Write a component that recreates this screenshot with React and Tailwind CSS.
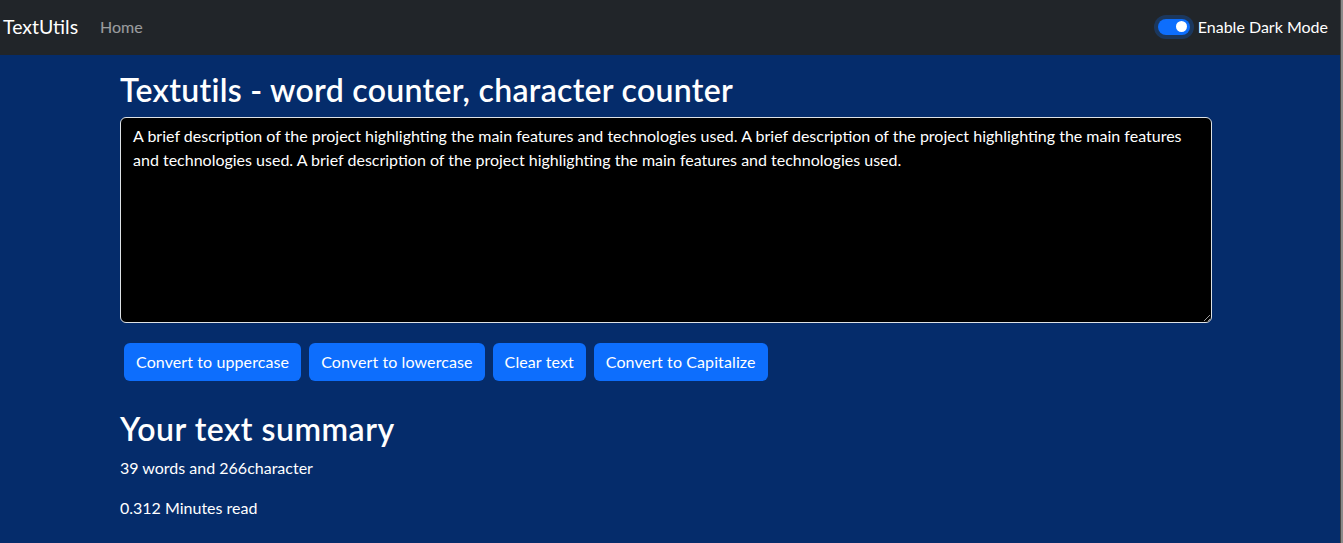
import React, { useState } from 'react';

const sample =
    'A brief description of the project highlighting the main features and technologies used. A brief description of the project highlighting the main features and technologies used. A brief description of the project highlighting the main features and technologies used.';

const App = () => {
    const [text, setText] = useState(sample);
    const words = text.split(/\s+/).filter((w) => w.length !== 0).length;

    return (
        <div className="min-h-[543px] bg-[#052c6b] font-['Lato',sans-serif] text-white flex">
            <div className="flex-1 flex flex-col">
                {/* Navbar */}
                <nav className="h-[55px] bg-[#212529] flex items-center justify-between pl-[3px] pr-[12px] pb-[2px]">
                    <div className="flex items-center">
                        <a className="text-[19.5px] leading-[30px] text-white mr-[22px]">TextUtils</a>
                        <a className="text-[16px] text-white/55">Home</a>
                    </div>
                    <label className="flex items-center gap-[8px]">
                        <span className="w-[32px] h-[16px] rounded-full bg-[#0d6efd] ring-4 ring-[#0d6efd]/25 flex items-center justify-end pr-[3px]">
                            <span className="w-[11px] h-[11px] rounded-full bg-white" />
                        </span>
                        <span className="text-[16px]">Enable Dark Mode</span>
                    </label>
                </nav>

                <main className="w-[1092px] ml-[120px] mt-[16px]">
                    <h1 className="text-[32px] leading-[38px] font-semibold tracking-[0.3px] mb-[8px]">
                        Textutils - word counter, character counter
                    </h1>
                    <textarea
                        rows={8}
                        value={text}
                        onChange={(e) => setText(e.target.value)}
                        className="block w-full h-[206px] bg-black text-white text-[16px] leading-[24px] px-[12px] py-[6px] border border-[#dee2e6] rounded-[6px] outline-none"
                    />
                    <div className="mt-[16px] flex">
                        {['Convert to uppercase', 'Convert to lowercase', 'Clear text', 'Convert to Capitalize'].map((label) => (
                            <button
                                key={label}
                                className="mx-[4px] my-[4px] h-[38px] px-[12px] rounded-[6px] bg-[#0d6efd] text-white text-[16px] tracking-[0.1px]"
                            >
                                {label}
                            </button>
                        ))}
                    </div>

                    <h2 className="mt-[25px] text-[32px] leading-[38px] font-semibold tracking-[0.5px] mb-[8px]">Your text summary</h2>
                    <p className="text-[16px] leading-[24px] mb-[16px]">
                        {words} words and {text.length}character
                    </p>
                    <p className="text-[16px] leading-[24px]">{(0.008 * words).toFixed(3)} Minutes read</p>
                </main>
            </div>
            <div className="w-[3px] bg-[#8a8a8a] border-l border-[#444]" />
        </div>
    );
};

export default App;
